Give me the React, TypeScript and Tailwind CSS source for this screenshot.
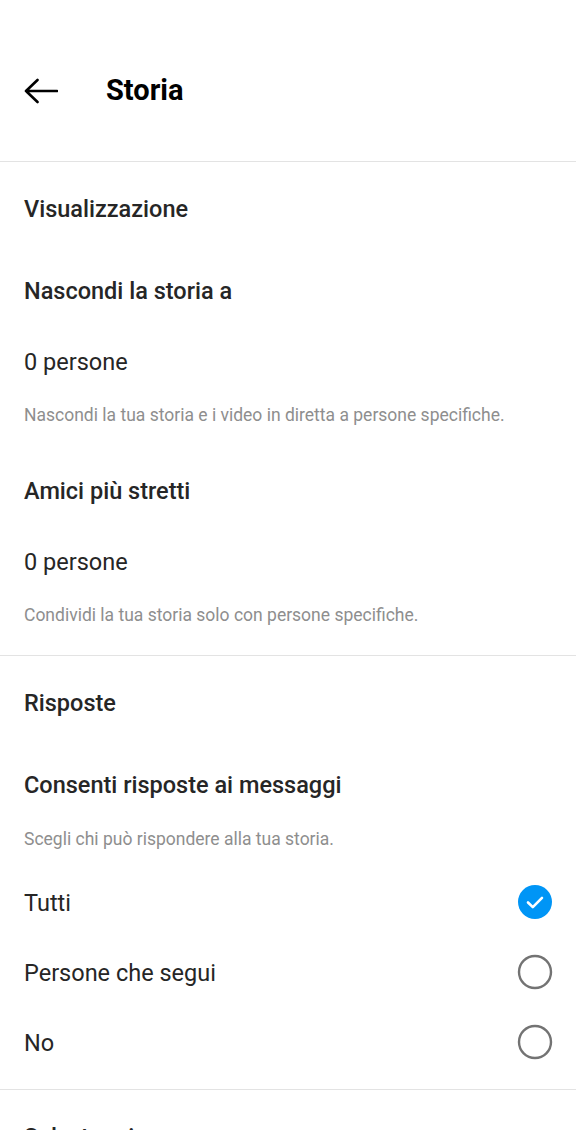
const font = { fontFamily: 'Roboto, "Noto Sans", sans-serif' };

function Radio({ checked }: { checked?: boolean }) {
	if (checked) {
		return (
			<svg width="36" height="36" viewBox="0 0 36 36" className="-mt-[3px]">
				<circle cx="18" cy="18" r="17" fill="#0095f6" />
				<path
					d="M11 18.5l4.8 4.6L25 13.8"
					fill="none"
					stroke="#fff"
					strokeWidth="2.6"
					strokeLinecap="round"
					strokeLinejoin="round"
				/>
			</svg>
		);
	}
	return (
		<svg width="36" height="36" viewBox="0 0 36 36" className="-mt-[3px]">
			<circle cx="18" cy="18" r="16" fill="none" stroke="#737373" strokeWidth="2.4" />
		</svg>
	);
}

function Row({ h, children, className = '' }: { h: string; children: React.ReactNode; className?: string }) {
	return <div className={`${h} flex items-center justify-between px-6 pt-[3px] ${className}`}>{children}</div>;
}

export default function App() {
	const options = [
		{ label: 'Tutti', checked: true },
		{ label: 'Persone che segui' },
		{ label: 'No' }
	];
	return (
		<div className="w-[576px] h-[1130px] overflow-hidden bg-white text-[#262626]" style={font}>
			{/* header */}
			<div className="h-[162px] pt-[20px] flex items-center border-b border-[#e3e3e3]">
				<div className="pl-[24px] w-[106px]">
					<svg width="34" height="26" viewBox="0 0 34 26" className="block">
						<path
							d="M2 13h31M13.5 2L2 13l11.5 11"
							fill="none"
							stroke="#000"
							strokeWidth="2.6"
							strokeLinecap="round"
							strokeLinejoin="round"
						/>
					</svg>
				</div>
				<h1 className="text-[29px] font-bold text-black leading-none">Storia</h1>
			</div>

			<Row h="h-[92px]">
				<span className="text-[23.5px] font-medium">Visualizzazione</span>
			</Row>
			<Row h="h-[72px]">
				<span className="text-[23.5px] font-medium">Nascondi la storia a</span>
			</Row>
			<Row h="h-[70px]">
				<span className="text-[23.5px]">0 persone</span>
			</Row>
			<Row h="h-[36px]" className="mb-[22px]">
				<span className="text-[17.5px] text-[#8e8e8e]">
					Nascondi la tua storia e i video in diretta a persone specifiche.
				</span>
			</Row>
			<Row h="h-[72px]">
				<span className="text-[23.5px] font-medium">Amici più stretti</span>
			</Row>
			<Row h="h-[70px]">
				<span className="text-[23.5px]">0 persone</span>
			</Row>
			<Row h="h-[36px]" className="mb-[23px]">
				<span className="text-[17.5px] text-[#8e8e8e]">Condividi la tua storia solo con persone specifiche.</span>
			</Row>

			<div className="border-t border-[#e3e3e3]">
				<Row h="h-[92px]">
					<span className="text-[23.5px] font-medium">Risposte</span>
				</Row>
				<Row h="h-[72px]">
					<span className="text-[23.5px] font-medium">Consenti risposte ai messaggi</span>
				</Row>
				<Row h="h-[36px]" className="mb-[11px]">
					<span className="text-[17.5px] text-[#8e8e8e]">Scegli chi può rispondere alla tua storia.</span>
				</Row>
				{options.map((o) => (
					<Row key={o.label} h="h-[70px]" className="pr-[23px]">
						<span className="text-[23.5px]">{o.label}</span>
						<Radio checked={o.checked} />
					</Row>
				))}
				<div className="h-[12px]" />
			</div>

			<div className="border-t border-[#e3e3e3]">
				<Row h="h-[92px]">
					<span className="text-[23.5px] font-medium">Salvataggio</span>
				</Row>
			</div>
		</div>
	);
}
